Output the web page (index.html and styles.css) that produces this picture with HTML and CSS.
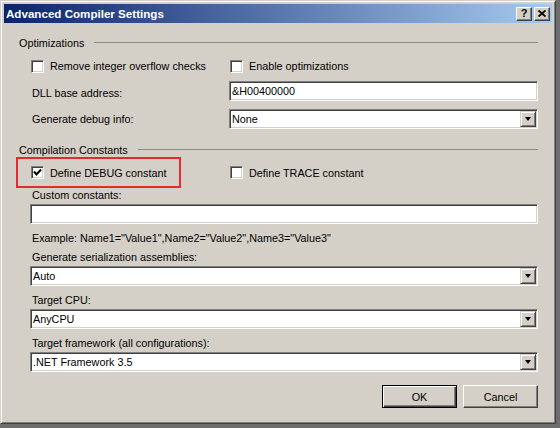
FILE: index.html
```html
<!DOCTYPE html>
<html>
<head>
<meta charset="utf-8">
<link rel="stylesheet" href="styles.css">
</head>
<body>
<div class="window">
  <div class="titlebar">
    <span class="title">Advanced Compiler Settings</span>
    <div class="tbtns">
      <span class="tbtn help">?</span>
      <span class="tbtn"><svg width="8" height="7" viewBox="0 0 8 7"><path d="M0.5 0.5 L7.5 6.5 M7.5 0.5 L0.5 6.5" stroke="#000" stroke-width="1.8" fill="none"/></svg></span>
    </div>
  </div>
  <div class="content">
    <div class="group-head mt13"><span>Optimizations</span><span class="rule"></span></div>
    <div class="indent">
      <div class="row grid mt9 h14">
        <label class="cb-item"><span class="cb"></span>Remove integer overflow checks</label>
        <label class="cb-item"><span class="cb"></span>Enable optimizations</label>
      </div>
      <div class="row grid mt8">
        <span class="lbl low">DLL base address:</span>
        <div class="field">&amp;H00400000</div>
      </div>
      <div class="row grid mt8">
        <span class="lbl">Generate debug info:</span>
        <div class="field combo"><span>None</span><span class="ddbtn"><span class="tri"></span></span></div>
      </div>
    </div>
    <div class="group-head mt14"><span>Compilation Constants</span><span class="rule"></span></div>
    <div class="indent">
      <div class="row grid debug-row">
        <span class="highlight"></span>
        <label class="cb-item"><span class="cb"><svg width="9" height="9" viewBox="0 0 9 9"><path d="M1 3.5 L3.5 6.5 L8 1.5" stroke="#000" stroke-width="2" fill="none"/></svg></span>Define DEBUG constant</label>
        <label class="cb-item"><span class="cb"></span>Define TRACE constant</label>
      </div>
      <div class="lbl h14">Custom constants:</div>
      <div class="field mt2"></div>
      <div class="lbl h14 mt7">Example: Name1="Value1",Name2="Value2",Name3="Value3"</div>
      <div class="lbl h14 mt5">Generate serialization assemblies:</div>
      <div class="field combo mt2"><span>Auto</span><span class="ddbtn"><span class="tri"></span></span></div>
      <div class="lbl h14 mt7">Target CPU:</div>
      <div class="field combo mt2"><span>AnyCPU</span><span class="ddbtn"><span class="tri"></span></span></div>
      <div class="lbl h14 mt7">Target framework (all configurations):</div>
      <div class="field combo mt2"><span>.NET Framework 3.5</span><span class="ddbtn"><span class="tri"></span></span></div>
    </div>
    <div class="buttons mt13">
      <span class="btn default">OK</span>
      <span class="btn">Cancel</span>
    </div>
  </div>
</div>
</body>
</html>
```

FILE: styles.css
```css
* { box-sizing: border-box; }
body {
  margin: 0;
  background: #6e6e6e;
  font-family: "Liberation Sans", Arial, sans-serif;
  font-size: 10.8px;
  color: #000;
}
.window {
  width: 556px;
  height: 424px;
  background: #d4d0c8;
  border: 1px solid;
  border-color: #d4d0c8 #404040 #404040 #d4d0c8;
  box-shadow: inset 1px 1px #fff, inset -1px -1px #808080;
  padding: 3px;
  display: flex;
  flex-direction: column;
}
.titlebar {
  height: 19px;
  background: linear-gradient(to right, #0a246a, #a6caf0);
  display: flex;
  align-items: center;
  justify-content: space-between;
  padding: 0 2px 0 2px;
}
.title {
  color: #fff;
  font-weight: bold;
  font-size: 11.6px;
  white-space: nowrap;
}
.tbtns { display: flex; gap: 2px; }
.tbtn {
  width: 16px;
  height: 14px;
  background: #d4d0c8;
  border: 1px solid;
  border-color: #fff #404040 #404040 #fff;
  box-shadow: inset -1px -1px #808080;
  display: flex;
  align-items: center;
  justify-content: center;
  font-weight: bold;
  font-size: 11px;
  line-height: 1;
}
.help { padding-bottom: 1px; }
.content {
  flex: 1;
  display: flex;
  flex-direction: column;
  padding: 0 14px 0 15px;
}
.mt2 { margin-top: 2px; }
.mt5 { margin-top: 5px; }
.mt7 { margin-top: 7px; }
.mt8 { margin-top: 8px; }
.mt9 { margin-top: 9px; }
.mt13 { margin-top: 13px; }
.mt14 { margin-top: 14px; }
.h14 { height: 14px; line-height: 14px; }
.group-head {
  height: 14px;
  display: flex;
  align-items: center;
  gap: 10px;
  white-space: nowrap;
}
.rule {
  flex: 1;
  height: 1px;
  background: #8a8a8a;
  margin-top: -1px;
}
.indent {
  margin-left: 11px;
  display: flex;
  flex-direction: column;
}
.row { height: 20px; align-items: center; }
.row.h14 { height: 14px; }
.grid {
  display: grid;
  grid-template-columns: 199px 1fr;
}
.lbl { padding-left: 2px; white-space: nowrap; }
.low { padding-top: 3px; }
.cb-item {
  display: flex;
  align-items: center;
  gap: 6px;
  padding-left: 1px;
  white-space: nowrap;
}
.cb {
  width: 13px;
  height: 13px;
  background: #fff;
  border: 1px solid;
  border-color: #808080 #fff #fff #808080;
  box-shadow: inset 1px 1px #404040, inset -1px -1px #d4d0c8;
  display: flex;
  align-items: center;
  justify-content: center;
  flex: none;
}
.field {
  height: 20px;
  background: #fff;
  border: 1px solid;
  border-color: #808080 #fff #fff #808080;
  box-shadow: inset 1px 1px #404040, inset -1px -1px #d4d0c8;
  padding: 1px 2px 1px 2px;
  line-height: 16px;
  white-space: nowrap;
}
.combo {
  display: flex;
  justify-content: space-between;
  align-items: center;
  padding-right: 1px;
}
.ddbtn {
  width: 16px;
  height: 16px;
  background: #d4d0c8;
  border: 1px solid;
  border-color: #d4d0c8 #404040 #404040 #d4d0c8;
  box-shadow: inset 1px 1px #fff, inset -1px -1px #808080;
  display: flex;
  align-items: center;
  justify-content: center;
}
.tri {
  width: 0;
  height: 0;
  border-left: 3.5px solid transparent;
  border-right: 3.5px solid transparent;
  border-top: 4px solid #000;
}
.debug-row {
  position: relative;
  height: 31px;
}
.highlight {
  position: absolute;
  left: -14px;
  top: 0;
  width: 165px;
  height: 31px;
  border: 2px solid #e52a2f;
}
.buttons {
  display: flex;
  justify-content: flex-end;
  gap: 6px;
}
.btn {
  width: 75px;
  height: 23px;
  background: #d4d0c8;
  border: 1px solid;
  border-color: #fff #404040 #404040 #fff;
  box-shadow: inset -1px -1px #808080;
  display: flex;
  align-items: center;
  justify-content: center;
}
.btn.default {
  border: 1px solid #000;
  box-shadow: inset 1px 1px #fff, inset -1px -1px #404040, inset -2px -2px #808080;
}
```
